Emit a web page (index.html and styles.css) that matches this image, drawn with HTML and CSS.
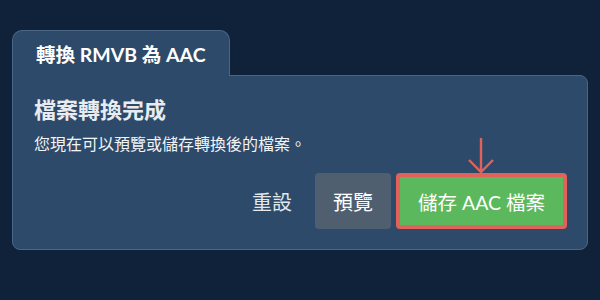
FILE: index.html
```html
<!DOCTYPE html>
<html lang="zh-Hant">
<head>
    <meta charset="UTF-8">
    <meta name="viewport" content="width=device-width, initial-scale=1.0">
    <title>轉換 RMVB 為 AAC</title>
    <link rel="stylesheet" href="styles.css">
</head>
<body>
    <div class="container">
        <div class="tab">轉換 RMVB 為 AAC</div>
        <div class="panel">
            <h2 class="panel-title">檔案轉換完成</h2>
            <p class="panel-text">您現在可以預覽或儲存轉換後的檔案。</p>
            <div class="actions">
                <button type="button" class="btn btn-link">重設</button>
                <button type="button" class="btn btn-gray">預覽</button>
                <button type="button" class="btn btn-save">
                    儲存 AAC 檔案
                    <svg class="hint-arrow" width="30" height="38" viewBox="0 0 30 38">
                        <path d="M15 1 V35 M3 23 L15 35 L27 23" fill="none" stroke="#e0625b" stroke-width="2.4"/>
                    </svg>
                </button>
            </div>
        </div>
    </div>
</body>
</html>
```

FILE: styles.css
```css
body {
    margin: 0;
    background: #0f2239;
    color: #FFFFFF;
    font-family: Lato, "Noto Sans CJK TC", sans-serif;
}

.container {
    padding: 30px 12px 0 12px;
}

.tab {
    position: relative;
    z-index: 1;
    display: inline-block;
    height: 45px;
    padding: 0 23px;
    margin-bottom: -1px;
    background: #2d4a6a;
    border: 1px solid #4a6686;
    border-bottom: none;
    border-radius: 10px 10px 0 0;
    font-size: 19.5px;
    font-weight: bold;
    line-height: 48px;
}

.panel {
    background: #2d4a6a;
    border: 1px solid #4a6686;
    border-radius: 0 8px 8px 8px;
    padding: 18px 20px 20px 21px;
}

.panel-title {
    margin: 0;
    font-size: 22px;
    font-weight: bold;
    line-height: 32px;
    color: #e8ecf0;
}

.panel-text {
    margin: 7px 0 0 0;
    font-size: 16px;
    line-height: 22px;
    color: #f2f4f6;
}

.actions {
    display: flex;
    justify-content: flex-end;
    gap: 5px;
    margin-top: 18px;
}

.btn {
    position: relative;
    height: 56px;
    padding: 0 18px;
    border: none;
    border-radius: 4px;
    font-family: Lato, "Noto Sans CJK TC", sans-serif;
    font-size: 20px;
    color: #FFFFFF;
    background: transparent;
    cursor: pointer;
}

.btn-link {
    color: #e4e8ec;
}

.btn-gray {
    background: #505f70;
}

.btn-save {
    background: #5cb85c;
    border: 4px solid #e0625b;
    font-size: 19.5px;
}

.hint-arrow {
    position: absolute;
    left: 50%;
    bottom: 100%;
    margin-left: -15px;
    margin-bottom: 2px;
}
```
